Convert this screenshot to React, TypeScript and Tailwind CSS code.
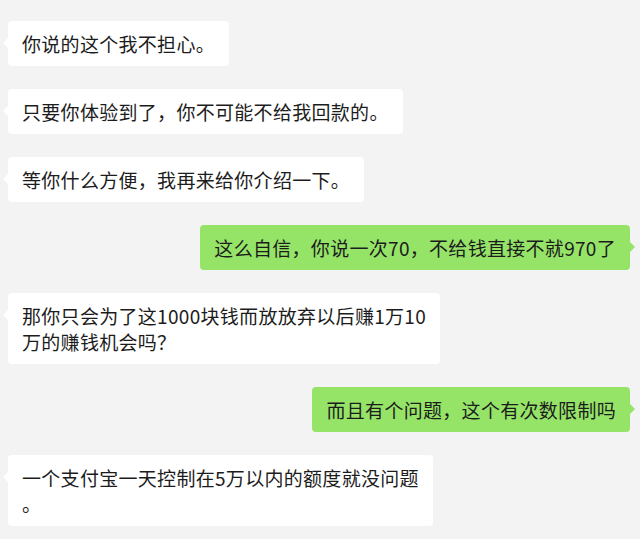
import React from 'react';

type Msg = { id: number; mine: boolean; lines: string[] };

const MESSAGES: Msg[] = [
  { id: 1, mine: false, lines: ['你说的这个我不担心。'] },
  { id: 2, mine: false, lines: ['只要你体验到了，你不可能不给我回款的。'] },
  { id: 3, mine: false, lines: ['等你什么方便，我再来给你介绍一下。'] },
  { id: 4, mine: true, lines: ['这么自信，你说一次70，不给钱直接不就970了'] },
  { id: 5, mine: false, lines: ['那你只会为了这1000块钱而放放弃以后赚1万10', '万的赚钱机会吗？'] },
  { id: 6, mine: true, lines: ['而且有个问题，这个有次数限制吗'] },
  { id: 7, mine: false, lines: ['一个支付宝一天控制在5万以内的额度就没问题', '。'] },
];

const Bubble: React.FC<{ msg: Msg }> = ({ msg }) => {
  return (
    <div className={`flex ${msg.mine ? 'justify-end pr-[10px]' : 'justify-start pl-[8px]'}`}>
      <div
        className={`relative rounded-[4px] px-[14px] py-[9.5px] text-[19px] leading-[26px] tracking-[0.3px] text-[#1c1c1c] whitespace-nowrap ${
          msg.mine ? 'bg-[#95e468]' : 'bg-white'
        }`}
      >
        {/* arrow */}
        {msg.mine ? (
          <span className="absolute top-[17px] -right-[5px] w-0 h-0 border-y-[5px] border-y-transparent border-l-[5px] border-l-[#95e468]" />
        ) : (
          <span className="absolute top-[17px] -left-[5px] w-0 h-0 border-y-[5px] border-y-transparent border-r-[5px] border-r-white" />
        )}
        {msg.lines.map((line, i) => (
          <div key={i}>{line}</div>
        ))}
      </div>
    </div>
  );
};

const App: React.FC = () => {
  return (
    <div
      className="w-[640px] h-[539px] overflow-hidden bg-[#f3f3f4] pt-[21px] flex flex-col gap-[23px]"
      style={{ fontFamily: '"Noto Sans CJK SC", "Noto Sans", sans-serif' }}
    >
      {MESSAGES.map((m) => (
        <Bubble key={m.id} msg={m} />
      ))}
    </div>
  );
};

export default App;
